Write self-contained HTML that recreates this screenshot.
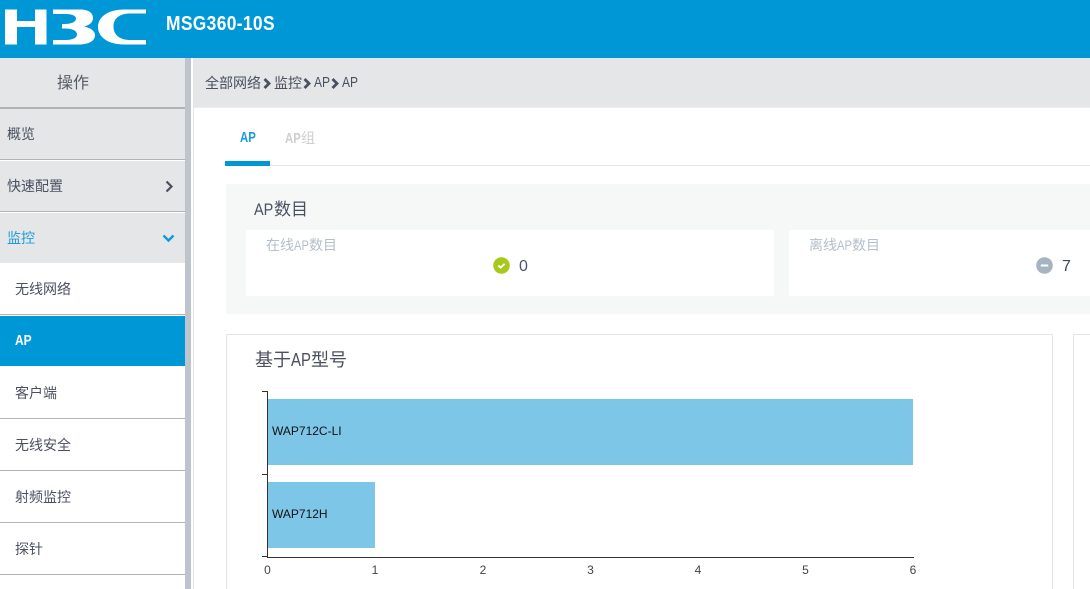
<!DOCTYPE html>
<html lang="zh-CN">
<head>
<meta charset="utf-8">
<title>MSG360-10S</title>
<style>
html,body{margin:0;padding:0;width:1090px;height:589px;overflow:hidden;background:#fff}
body{position:relative;font-family:"Liberation Sans","Noto Sans CJK SC",sans-serif;color:#4a5060}
.a{position:absolute}
.t{position:absolute;white-space:nowrap;line-height:20px}
.row{position:absolute;left:0;width:185px}
.line{position:absolute;left:0;width:185px;height:1px;background:#b3b3b3}
.m{font-size:14px;color:#4a5060}
.n{display:inline-block;transform-origin:0 50%;vertical-align:baseline}
</style>
</head>
<body>
<!-- Header -->
<div class="a" style="left:0;top:0;width:1090px;height:58px;background:#0097d7"></div>
<svg class="a" style="left:0;top:0" width="150" height="58" viewBox="0 0 150 58" role="img" aria-label="H3C">
  <path fill="#fff" d="M5 9.500H17V21H35V9.500H46.500V44.500H35V27H17V44.500H5Z"/>
  <path fill="#fff" d="M53 9.500H80C89 9.500 93 13 93 18C93 22 90 25 84 26.500C91 28 95 31 95 35C95 41 89 44.500 78 44.500H53V40H66C72 40 77 38 77 34.500C77 30.500 72 28.500 65 28.500H62V24H65C71 24 76 22 76 18.500C76 15.500 71 14 66 14H53Z"/>
  <path fill="#fff" d="M146 9.500V13.500H130C120 13.500 113.500 18 113.500 26.500C113.500 35 120 40 130 40H146V44.500H124C108 44.500 98 37 98 27C98 17 108 9.500 124 9.500Z"/>
</svg>
<div class="t" style="left:166px;top:14px;font-size:20px;font-weight:bold;color:#fff;transform:scaleX(.87);transform-origin:0 50%;letter-spacing:.4px">MSG360-10S</div>

<!-- Sidebar -->
<div class="row" style="top:58px;height:49px;background:#e4e6e8"></div>
<div class="t" style="left:0;width:146px;text-align:center;top:74px;font-size:16px;color:#555a63">操作</div>
<div class="line" style="top:107px;height:2px"></div>
<div class="row" style="top:109px;height:50px;background:#e4e6e8"></div>
<div class="t m" style="left:7px;top:124px">概览</div>
<div class="line" style="top:159px"></div>
<div class="row" style="top:161px;height:50px;background:#e4e6e8"></div>
<div class="t m" style="left:7px;top:176px">快速配置</div>
<svg class="a" style="left:164px;top:180px" width="11" height="13" viewBox="0 0 11 13"><path d="M2.500 1.500L7.500 6.500L2.500 11.500" fill="none" stroke="#4a5060" stroke-width="2.200"/></svg>
<div class="line" style="top:211px"></div>
<div class="row" style="top:213px;height:50px;background:#e4e6e8"></div>
<div class="t m" style="left:7px;top:228px;color:#1f9cd8">监控</div>
<svg class="a" style="left:162px;top:233px" width="13" height="11" viewBox="0 0 13 11"><path d="M1.500 2.500L6.500 7.500L11.500 2.500" fill="none" stroke="#0f9bd9" stroke-width="2.400"/></svg>
<div class="t m" style="left:15px;top:279px">无线网络</div>
<div class="line" style="top:314px"></div>
<div class="row" style="top:316px;height:50px;background:#0097d7"></div>
<div class="t" style="left:15px;top:331px;font-size:15px;font-weight:bold;color:#fff;transform:scaleX(.8);transform-origin:0 50%">AP</div>
<div class="t m" style="left:15px;top:383px">客户端</div>
<div class="line" style="top:418px"></div>
<div class="t m" style="left:15px;top:435px">无线安全</div>
<div class="line" style="top:470px"></div>
<div class="t m" style="left:15px;top:487px">射频监控</div>
<div class="line" style="top:522px"></div>
<div class="t m" style="left:15px;top:539px">探针</div>
<div class="line" style="top:574px"></div>

<!-- Splitter -->
<div class="a" style="left:185px;top:58px;width:6px;height:531px;background:#bdc4cd"></div>
<div class="a" style="left:193px;top:58px;width:1px;height:531px;background:#e2e4e6"></div>

<!-- Breadcrumb -->
<div class="a" style="left:194px;top:58px;width:896px;height:49px;background:#e4e6e8"></div>
<div class="a" style="left:194px;top:107px;width:896px;height:1px;background:#ececee"></div>
<div class="t" style="left:205px;top:73px;font-size:14px;color:#4a5060">全部网络</div>
<svg class="a" style="left:263px;top:78px" width="9" height="11" viewBox="0 0 9 11"><path d="M1.500 1L6 5.500L1.500 10" fill="none" stroke="#4a5060" stroke-width="2.800"/></svg>
<div class="t" style="left:274px;top:73px;font-size:14px;color:#4a5060">监控</div>
<svg class="a" style="left:303px;top:78px" width="9" height="11" viewBox="0 0 9 11"><path d="M1.500 1L6 5.500L1.500 10" fill="none" stroke="#4a5060" stroke-width="2.800"/></svg>
<div class="t" style="left:314px;top:73px;font-size:15px;color:#4a5060;transform:scaleX(.8);transform-origin:0 50%">AP</div>
<svg class="a" style="left:331px;top:78px" width="9" height="11" viewBox="0 0 9 11"><path d="M1.500 1L6 5.500L1.500 10" fill="none" stroke="#4a5060" stroke-width="2.800"/></svg>
<div class="t" style="left:342px;top:73px;font-size:15px;color:#4a5060;transform:scaleX(.8);transform-origin:0 50%">AP</div>

<!-- Tabs -->
<div class="a" style="left:225px;top:165px;width:865px;height:1px;background:#e4e6e8"></div>
<div class="a" style="left:225px;top:161px;width:45px;height:5px;background:#0097d7"></div>
<div class="t" style="left:240px;top:128px;font-size:15px;font-weight:bold;color:#1a9bd8;transform:scaleX(.76);transform-origin:0 50%">AP</div>
<div class="t" style="left:285px;top:128px;font-size:15px;font-weight:bold;color:#cfcfcf"><span class="n" style="width:16px;transform:scaleX(.76)">AP</span><span style="font-weight:normal;font-size:14px">组</span></div>

<!-- AP count panel -->
<div class="a" style="left:226px;top:184px;width:864px;height:130px;background:#f6f8f8"></div>
<div class="t" style="left:254px;top:200px;font-size:17px;color:#4a5060"><span class="n" style="width:20px;transform:scaleX(.85)">AP</span>数目</div>
<div class="a" style="left:246px;top:230px;width:528px;height:66px;background:#fff"></div>
<div class="a" style="left:789px;top:230px;width:301px;height:66px;background:#fff"></div>
<div class="t" style="left:266px;top:235px;font-size:14px;color:#b3bfc9">在线<span class="n" style="width:15px;transform:scaleX(.8)">AP</span>数目</div>
<div class="t" style="left:809px;top:235px;font-size:14px;color:#b3bfc9">离线<span class="n" style="width:15px;transform:scaleX(.8)">AP</span>数目</div>
<svg class="a" style="left:493px;top:257px" width="17" height="17" viewBox="0 0 17 17"><circle cx="8.500" cy="8.500" r="8.300" fill="#a6c91b"/><path d="M5.300 8.600L7.600 10.600L11.600 6.800" fill="none" stroke="#fff" stroke-width="1.800"/></svg>
<div class="t" style="left:519px;top:257px;font-size:16px;color:#4a5570">0</div>
<svg class="a" style="left:1036px;top:257px" width="17" height="17" viewBox="0 0 17 17"><circle cx="8.500" cy="8.500" r="8.300" fill="#a5b4c0"/><rect x="4.800" y="7.500" width="7.400" height="2" fill="#fff"/></svg>
<div class="t" style="left:1062px;top:257px;font-size:16px;color:#3d4760">7</div>

<!-- Chart cards -->
<div class="a" style="left:226px;top:334px;width:825px;height:260px;border:1px solid #e4e6e6"></div>
<div class="a" style="left:1073px;top:334px;width:30px;height:260px;border:1px solid #e4e6e6"></div>
<div class="t" style="left:255px;top:350px;font-size:18px;color:#4a5060">基于<span class="n" style="width:20px;transform:scaleX(.83)">AP</span>型号</div>

<svg class="a" style="left:250px;top:385px" width="680" height="204" viewBox="250 385 680 204">
  <rect x="268" y="399" width="645" height="66" fill="#7dc6e8"/>
  <rect x="268" y="482" width="107" height="66" fill="#7dc6e8"/>
  <path d="M262 391.500H267.500V557.500H914M262 474.500H267M262 556.500H267" fill="none" stroke="#333" stroke-width="1"/>
  <g font-family="'Liberation Sans',sans-serif" font-size="12" fill="#111">
    <text x="272" y="435">WAP712C-LI</text>
    <text x="272" y="518">WAP712H</text>
  </g>
  <g font-family="'Liberation Sans',sans-serif" font-size="12" fill="#444" text-anchor="middle">
    <text x="267.500" y="574">0</text>
    <text x="375" y="574">1</text>
    <text x="483" y="574">2</text>
    <text x="590.500" y="574">3</text>
    <text x="698" y="574">4</text>
    <text x="805.500" y="574">5</text>
    <text x="913" y="574">6</text>
  </g>
</svg>
</body>
</html>
